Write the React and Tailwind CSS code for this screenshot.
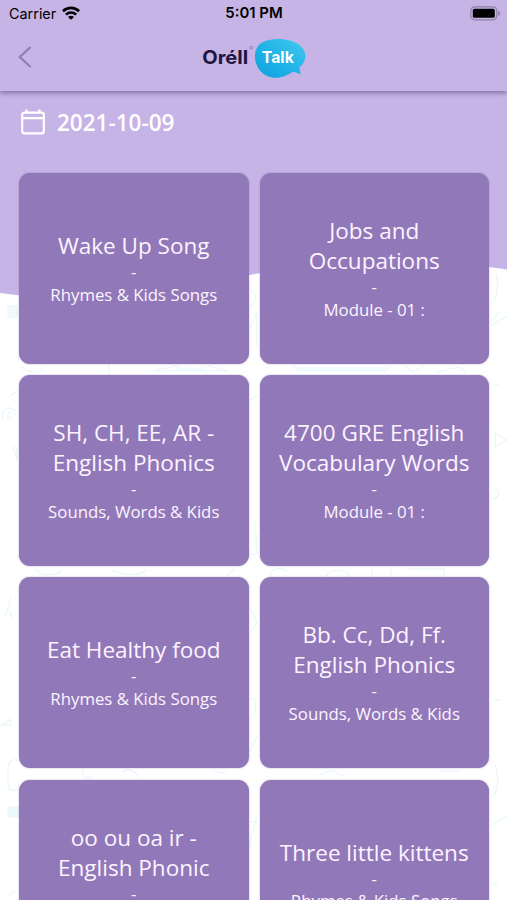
const lessons = [
    { id: 1, title: ["Wake Up Song"], module: "Rhymes & Kids Songs" },
    { id: 2, title: ["Jobs and", "Occupations"], module: "Module - 01 :" },
    { id: 3, title: ["SH, CH, EE, AR -", "English Phonics"], module: "Sounds, Words & Kids" },
    { id: 4, title: ["4700 GRE English", "Vocabulary Words"], module: "Module - 01 :" },
    { id: 5, title: ["Eat Healthy food"], module: "Rhymes & Kids Songs" },
    { id: 6, title: ["Bb. Cc, Dd, Ff.", "English Phonics"], module: "Sounds, Words & Kids" },
    { id: 7, title: ["oo ou oa ir -", "English Phonic"], module: "Sounds, Words & Kids" },
    { id: 8, title: ["Three little kittens"], module: "Rhymes & Kids Songs" },
];

function WifiIcon() {
    return (
        <svg width="18" height="14" viewBox="0 0 18 14" fill="none" stroke="#000" strokeWidth="2.7">
            <path d="M0.9 5.2C5.5 0.7 12.5 0.7 17.1 5.2" />
            <path d="M3.9 8.6C6.8 5.8 11.2 5.8 14.1 8.6" />
            <path d="M9 13.8L6 11C7.8 9.4 10.2 9.4 12 11Z" fill="#000" stroke="none" />
        </svg>
    );
}

function BatteryIcon() {
    return (
        <svg width="31" height="15" viewBox="0 0 31 15" fill="none">
            <rect x="0.8" y="0.8" width="26" height="13" rx="4" stroke="#8d7fa3" strokeWidth="1.2" />
            <rect x="2.8" y="2.8" width="22" height="9" rx="1.6" fill="#000" />
            <path d="M28.2 4.9C30.8 5.7 30.8 8.9 28.2 9.7Z" fill="#8d7fa3" />
        </svg>
    );
}

function BackIcon() {
    return (
        <svg width="14" height="22" viewBox="0 0 14 22" fill="none" stroke="#8f7db5" strokeWidth="2.2">
            <path d="M12.6 1L1.8 11L12.6 21" />
        </svg>
    );
}

function CalendarIcon() {
    return (
        <svg width="24" height="26" viewBox="0 0 24 26" fill="none" stroke="#fff" strokeWidth="2.2">
            <rect x="1.2" y="3.6" width="21.6" height="20.8" rx="2.2" />
            <path d="M1.2 9.2H22.8M5.6 0.4V4M18.4 0.4V4" />
        </svg>
    );
}

function Logo() {
    return (
        <svg width="104" height="42" viewBox="0 0 104 42">
            <defs>
                <linearGradient id="bubble" x1="0" y1="1" x2="1" y2="0">
                    <stop offset="0" stopColor="#0f9fdc" />
                    <stop offset="0.45" stopColor="#1fb2e8" />
                    <stop offset="1" stopColor="#43c9ee" />
                </linearGradient>
            </defs>
            <text x="0.2" y="26.2" fill="#21143f" fontSize="18.5" fontWeight="700" fontFamily="Inter, sans-serif" textLength="46" lengthAdjust="spacingAndGlyphs">Oréll</text>
            <circle cx="49.2" cy="9.6" r="1.3" fill="none" stroke="#776594" strokeWidth="0.7" />
            <path d="M53 17C53.5 6 62 1.5 74 1C90 0.5 103 7 103.4 17.5C103.6 22.5 101 26.5 97.4 29.4L98.8 36.4L91.6 33.4C85.5 36.8 80 40 73.5 39.8C61.5 39.5 52.5 30 53 17Z" fill="url(#bubble)" />
            <text x="59.8" y="25.2" fill="#fff" fontSize="16.5" fontWeight="700" fontFamily="Inter, sans-serif" textLength="32" lengthAdjust="spacingAndGlyphs">Talk</text>
        </svg>
    );
}

// Lilac wave at the top with faint school doodles below it
function Backdrop() {
    return (
        <svg className="absolute inset-0" width="507" height="900" viewBox="0 0 507 900" fill="none">
            <path d="M0 0H507V269.5C430 258 350 256 255 274C170 291 100 306 0 293Z" fill="#c7b4e6" />
            <g stroke="#e8f6f9" strokeWidth="1.1">
                <rect x="8" y="306" width="9" height="11" fill="#f1fafb" />
                <path d="M3 420C0 410 8 404 16 411M12 420A4 4 0 1 1 16 416M11 395L17 391M13 447L17 460V449Z" />
                <path d="M22 366C26 374 42 374 43 366M109 364V374M153 371L176 366L190 371L210 366L228 371Z" />
                <path d="M250 290C257 292 257 304 250 306M249 330L257 312V350M250 400L259 394M255 520V546M250 554H257V534" />
                <path d="M294 366L298 371H385L392 366M404 366L413 372L424 366M436 372L460 367L466 372" />
                <path d="M496 274C499 282 498 294 493 302M492 325L507 316M491 322L499 312M495 432V448L506 440ZM493 386L499 384M494 488C500 491 500 497 493 499" />
                <path d="M35 569C40 577 60 576 62 569M112 570C124 576 140 576 146 570M226 576L234 569" />
                <path d="M270 575A9 9 0 0 1 286 572M326 577C330 568 346 568 350 577M372 568V577M391 568V577M407 569H444V577" />
                <path d="M5 617L11 597M9 610L12 618M0 726L11 719V725H2M18 760C8 758 8 765 8 775V786C8 790 12 791 18 790M9 895L15 891" />
                <rect x="8" y="807" width="10" height="10" fill="#edfafa" />
                <path d="M251 610L257 622L251 632M250 700C256 692 258 710 251 719M249 752L258 735M248 850L257 815M250 822H258" />
                <path d="M83 770V777H94M122 772C128 768 136 770 137 777M214 771L226 774M319 775L331 770L344 776M440 771L460 771" />
                <path d="M495 765C500 778 498 790 492 798M492 825L507 816M493 882L498 886M494 700H502" />
            </g>
            <path d="M296 367H389L386 371H299ZM165 371L188 367L220 371Z" fill="#f1fafc" />
        </svg>
    );
}

function LessonCard({ lesson }) {
    return (
        <button className="flex h-[191px] flex-col items-center justify-center rounded-[11px] bg-[#9179b9] text-center text-[#fdf3ff] shadow-[0_0_2px_rgba(110,85,155,0.5)]">
            <span className="text-[22.5px] leading-[30px] whitespace-nowrap">
                {lesson.title.map((line) => (
                    <span key={line} className="block">{line}</span>
                ))}
            </span>
            <span className="text-[16.8px] leading-[22.5px]">-</span>
            <span className="text-[16.8px] leading-[22.5px] whitespace-nowrap">{lesson.module}</span>
        </button>
    );
}

export default function App() {
    return (
        <div className="relative h-[900px] w-[507px] overflow-hidden bg-white font-['Open_Sans',sans-serif]">
            <Backdrop />

            <div className="relative">
                <header className="h-[91px] bg-[#c7b4e6] shadow-[0_2px_5px_rgba(60,40,90,0.5)]">
                    {/* Status bar */}
                    <div className="grid h-[27px] grid-cols-[1fr_auto_1fr] items-center pr-[6px] pl-[7px] font-[Inter,sans-serif] text-black">
                        <div className="flex items-center gap-[6px] pl-[2px] text-[14.4px]">
                            <span>Carrier</span>
                            <WifiIcon />
                        </div>
                        <div className="text-center text-[14.9px] font-semibold">5:01 PM</div>
                        <div className="flex justify-end">
                            <BatteryIcon />
                        </div>
                    </div>

                    <div className="grid h-[64px] grid-cols-[1fr_104px_1fr] items-center">
                        <button className="pb-[4px] pl-[18px]">
                            <BackIcon />
                        </button>
                        <Logo />
                    </div>
                </header>

                <main className="pr-[18px] pl-[19px]">
                    <div className="flex h-[82px] items-start gap-[12px] pt-[18px] pl-[2px] text-white">
                        <CalendarIcon />
                        <h1 className="text-[22.5px] leading-[28px] font-semibold">2021-10-09</h1>
                    </div>

                    <div className="grid grid-cols-2 gap-x-[11px] gap-y-[11.2px]">
                        {lessons.map((lesson) => (
                            <LessonCard key={lesson.id} lesson={lesson} />
                        ))}
                    </div>
                </main>
            </div>
        </div>
    );
}
